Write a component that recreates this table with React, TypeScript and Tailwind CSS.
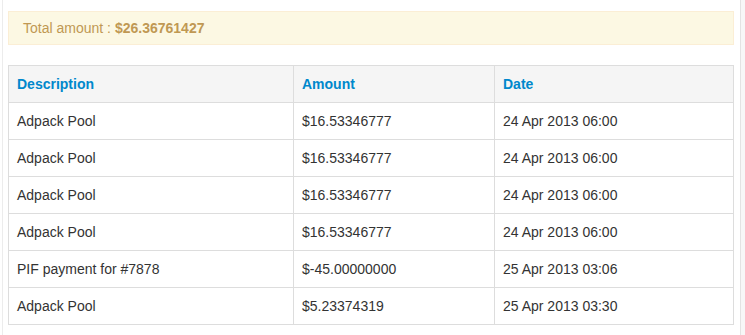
const rows = [
  { desc: "Adpack Pool", amount: "$16.53346777", date: "24 Apr 2013 06:00" },
  { desc: "Adpack Pool", amount: "$16.53346777", date: "24 Apr 2013 06:00" },
  { desc: "Adpack Pool", amount: "$16.53346777", date: "24 Apr 2013 06:00" },
  { desc: "Adpack Pool", amount: "$16.53346777", date: "24 Apr 2013 06:00" },
  { desc: "PIF payment for #7878", amount: "$-45.00000000", date: "25 Apr 2013 03:06" },
  { desc: "Adpack Pool", amount: "$5.23374319", date: "25 Apr 2013 03:30" },
];

const App = () => {
  return (
    <div
      className="flex h-[335px] w-[745px] overflow-hidden bg-white text-[14px] leading-5 text-[#333]"
      style={{ fontFamily: '"Liberation Sans", Arial, sans-serif' }}
    >
      <div className="w-[2px]" />
      <div className="w-px bg-[#ececec]" />
      <div className="flex-1 pl-[5px] pr-[6px] pt-[11px]">
        {/* Total amount alert */}
        <div className="flex h-[34px] items-center border border-[#fbeed5] bg-[#fcf8e3] pl-[14px] text-[#c09853]">
          Total amount : <span className="ml-1 font-bold">$26.36761427</span>
        </div>

        {/* Transactions table */}
        <table className="mt-[20px] w-full table-fixed border-collapse border border-[#ddd]">
          <colgroup>
            <col className="w-[285px]" />
            <col className="w-[201px]" />
            <col />
          </colgroup>
          <thead>
            <tr className="bg-[#f5f5f5]">
              <th className="border border-[#ddd] px-2 py-2 text-left font-bold text-[#0088cc]">
                Description
              </th>
              <th className="border border-[#ddd] px-2 py-2 text-left font-bold text-[#0088cc]">
                Amount
              </th>
              <th className="border border-[#ddd] px-2 py-2 text-left font-bold text-[#0088cc]">
                Date
              </th>
            </tr>
          </thead>
          <tbody>
            {rows.map((r, i) => (
              <tr key={i}>
                <td className="border border-[#ddd] px-2 py-2">{r.desc}</td>
                <td className="border border-[#ddd] px-2 py-2">{r.amount}</td>
                <td className="border border-[#ddd] px-2 py-2">{r.date}</td>
              </tr>
            ))}
          </tbody>
        </table>
      </div>
      <div className="w-px bg-[#e3e3e3]" />
      <div className="w-[4px] bg-[#f7f7f7]" />
    </div>
  );
};

export default App;
